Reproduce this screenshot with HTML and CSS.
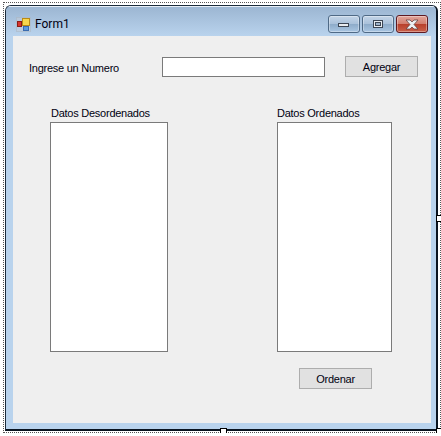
FILE: index.html
```html
<!DOCTYPE html>
<html lang="en">
<head>
  <meta charset="UTF-8">
  <title>Form1</title>
  <link rel="stylesheet" href="styles.css">
</head>
<body>
  <div class="selection">
    <div class="window">
      <div class="title-bar">
        <svg class="form-icon" width="15" height="15" viewBox="0 0 15 15">
          <rect x="0.500" y="0.500" width="14" height="14" fill="#c9cfd6" fill-opacity="0.45" stroke="#a9b3bd" stroke-opacity="0.5"/>
          <rect x="1.500" y="4.500" width="4" height="5" fill="#d8352c" stroke="#8a1d18"/>
          <rect x="6.500" y="1.500" width="7" height="7" fill="#f8d64e" stroke="#b98a14"/>
          <rect x="7.500" y="9.500" width="5" height="4" fill="#5d9be0" stroke="#3a6cb0"/>
        </svg>
        <span class="title">Form1</span>
        <div class="caption-buttons">
          <div class="caption-btn">
            <svg width="14" height="8" viewBox="0 0 14 8"><rect x="1.500" y="3.500" width="10" height="3" fill="#e8ecf0" stroke="#3c4654"/></svg>
          </div>
          <div class="caption-btn">
            <svg width="14" height="10" viewBox="0 0 14 10"><rect x="2.500" y="1.500" width="9" height="7" fill="#e8ecf0" stroke="#3c4654"/><rect x="4.500" y="3.500" width="5" height="3" fill="#9fb5cc" stroke="#3c4654"/></svg>
          </div>
          <div class="caption-btn close">
            <svg width="16" height="11" viewBox="0 0 16 11"><path d="M2 1h4l2 2 2-2h4l-4 4.500 4 4.500h-4l-2-2-2 2H2l4-4.500z" fill="#eceff2" stroke="#5a3a3a" stroke-width="0.7"/></svg>
          </div>
        </div>
      </div>
      <div class="client">
        <div class="input-row">
          <label class="input-label" for="numero">Ingrese un Numero</label>
          <input class="text-box" id="numero" type="text">
          <button class="form-btn add-btn">Agregar</button>
        </div>
        <div class="lists">
          <div class="list-col unsorted">
            <span class="list-label">Datos Desordenados</span>
            <div class="list-box"></div>
          </div>
          <div class="list-col sorted">
            <span class="list-label">Datos Ordenados</span>
            <div class="list-box"></div>
          </div>
        </div>
        <div class="bottom-row">
          <button class="form-btn">Ordenar</button>
        </div>
      </div>
    </div>
    <div class="handle handle-right"></div>
    <div class="handle handle-bottom"></div>
    <div class="handle handle-corner"></div>
  </div>
</body>
</html>
```

FILE: styles.css
```css
* {
  box-sizing: border-box;
}

body {
  margin: 0;
  background: #ffffff;
  font-family: "Liberation Sans", Arial, sans-serif;
  font-size: 11px;
  letter-spacing: -0.25px;
  color: #000010;
}

.selection {
  position: relative;
  width: 438px;
  height: 431px;
  margin: 2px 0 0 3px;
  padding: 2px 2px 2px 1px;
  border: 1px dotted #555555;
}

.window {
  width: 433px;
  height: 426px;
  display: flex;
  flex-direction: column;
  background: #b9d3ed;
  border: 1px solid #1c2b3a;
  border-bottom: 2px solid #0a1420;
  border-right: 2px solid #0a1420;
  border-top-left-radius: 6px;
  border-top-right-radius: 6px;
  overflow: hidden;
}

.title-bar {
  height: 30px;
  flex-shrink: 0;
  display: flex;
  align-items: flex-start;
  padding: 0 8px 0 10px;
  background: linear-gradient(#9cb6d2, #b9d3ed);
  border-top: 1px solid #e6eef6;
}

.form-icon {
  margin-top: 10px;
}

.title {
  margin-left: 4px;
  margin-top: 10px;
  font-family: Roboto, "Liberation Sans", sans-serif;
  font-size: 12px;
  letter-spacing: 0;
}

.caption-buttons {
  margin-left: auto;
  margin-top: 8px;
  display: flex;
  gap: 2px;
}

.caption-btn {
  width: 32px;
  height: 18px;
  display: flex;
  align-items: center;
  justify-content: center;
  border: 1px solid #4f6a86;
  border-radius: 3px;
  background: linear-gradient(#c3d5e8 0, #a9c1da 50%, #8dabc9 51%, #a9c6e2 100%);
  box-shadow: inset 0 0 0 1px rgba(255, 255, 255, 0.35);
}

.caption-btn.close {
  border-color: #5e1a22;
  background: linear-gradient(#e2a59a 0, #d27f70 48%, #b8402c 52%, #c9604a 100%);
}

.client {
  width: 418px;
  height: 387px;
  margin-left: 7px;
  background: #efefef;
  padding: 20px 0 0 16px;
}

.input-row {
  display: flex;
  align-items: center;
  height: 21px;
}

.input-label {
  width: 133px;
  padding-top: 2px;
}

.text-box {
  width: 163px;
  height: 20px;
  border: 1px solid #7a7a7a;
  background: #ffffff;
  padding: 0;
}

.form-btn {
  height: 21px;
  width: 73px;
  padding: 0;
  border: 1px solid #adadad;
  background: #e1e1e1;
  font: inherit;
  letter-spacing: inherit;
  color: inherit;
}

.add-btn {
  margin-left: 20px;
}

.lists {
  display: flex;
  margin: 29px 0 0 21px;
}

.list-col {
  display: flex;
  flex-direction: column;
}

.list-label {
  height: 16px;
  line-height: 14px;
  padding-left: 1px;
}

.list-box {
  height: 230px;
  background: #ffffff;
  border: 1px solid #7a7a7a;
}

.unsorted {
  width: 118px;
}

.sorted {
  width: 115px;
  margin-left: 109px;
}

.sorted .list-label {
  padding-left: 0;
}

.bottom-row {
  display: flex;
  margin: 16px 0 0 270px;
}

.handle {
  position: absolute;
  width: 7px;
  height: 7px;
  background: #ffffff;
  border: 1px solid #000000;
}

.handle-right {
  right: -3px;
  top: 212px;
}

.handle-bottom {
  bottom: -3px;
  left: 216px;
}

.handle-corner {
  right: -3px;
  bottom: -3px;
}
```
